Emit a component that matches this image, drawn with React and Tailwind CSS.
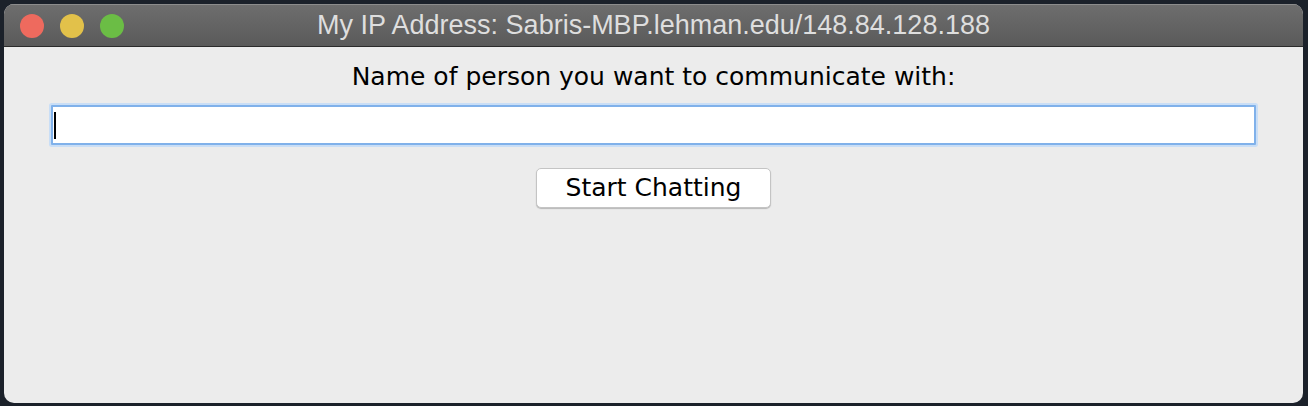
import React from "react";

function TrafficLights() {
  return (
    <div className="absolute left-[16px] top-[10px] flex gap-[16px]">
      <span className="block h-[24px] w-[24px] rounded-full bg-[#ee6a5e]" />
      <span className="block h-[24px] w-[24px] rounded-full bg-[#e2c14a]" />
      <span className="block h-[24px] w-[24px] rounded-full bg-[#6bbd45]" />
    </div>
  );
}

export default function App() {
  return (
    <div className="h-[406px] w-[1308px] bg-[#1b212a] pl-[4px] pr-[5px] pt-[4px] pb-[3px]">
      <div className="flex h-full w-full flex-col overflow-hidden rounded-[10px] bg-[#ececec]">
        {/* title bar */}
        <div className="relative flex h-[43px] items-center justify-center border-b border-[#2b2b2b] bg-gradient-to-b from-[#6e6e6e] to-[#5a5a5a] shadow-[inset_0_1px_0_#8c8c8c]">
          <TrafficLights />
          <span
            className="text-[27px] text-[#dedede]"
            style={{ fontFamily: "'Liberation Sans', Arial, sans-serif" }}
          >
            My IP Address: Sabris-MBP.lehman.edu/148.84.128.188
          </span>
        </div>

        {/* content */}
        <div
          className="flex flex-col items-center px-[47px] pt-[14px]"
          style={{ fontFamily: "'DejaVu Sans', Verdana, sans-serif" }}
        >
          <p className="text-[25px] leading-[32px] text-black">Name of person you want to communicate with:</p>
          <div className="mt-[12px] flex h-[40px] w-full items-center rounded-[1px] border-2 border-[#80b1ea] bg-white px-[1px] shadow-[0_0_0_2px_#c9def6]">
            <span className="block h-[27px] w-[2px] bg-black" />
          </div>
          <button className="mt-[23px] h-[40px] w-[235px] rounded-[5px] border border-[#c4c4c4] bg-white text-[25px] text-black shadow-[0_1px_1px_#b8b8b8]">
            Start Chatting
          </button>
        </div>
      </div>
    </div>
  );
}
